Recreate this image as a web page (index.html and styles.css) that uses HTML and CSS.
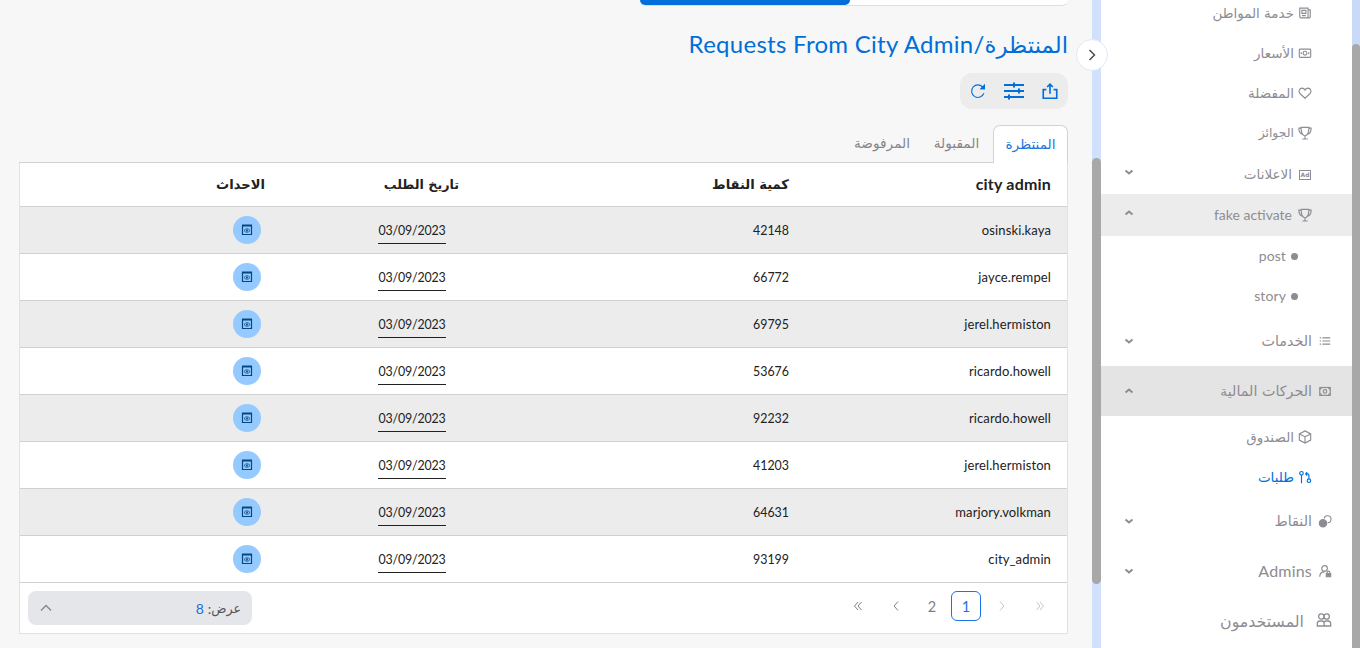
FILE: index.html
```html
<!DOCTYPE html>
<html lang="ar" dir="rtl">
<head>
<meta charset="utf-8">
<title>Requests From City Admin</title>
<link rel="stylesheet" href="styles.css">
</head>
<body>
<svg class="defs" aria-hidden="true">
  <symbol id="i-news" viewBox="0 0 16 16"><path d="M2 2.500h9.500v11H3.200L2 12.500zM11.500 4.500H14v8l-1 1h-1.500M4.500 5h4.500v3.500H4.500zM4.500 11H9"/></symbol>
  <symbol id="i-cash" viewBox="0 0 16 16"><rect x="1.500" y="3.500" width="13" height="9.500" rx="1"/><circle cx="8" cy="8.200" r="2.200"/><path d="M3.700 7v2.500M12.300 7v2.500"/></symbol>
  <symbol id="i-heart" viewBox="0 0 16 16"><path d="M8 14 2.500 8.900C0 6.300 1.500 2.500 4.600 2.500 6.500 2.500 7.500 3.700 8 4.700c.5-1 1.500-2.200 3.400-2.200 3.100 0 4.600 3.800 2.100 6.400z"/></symbol>
  <symbol id="i-cup" viewBox="0 0 16 16"><path d="M3.500 1.500h9c0 5-1 9-4.500 10-3.500-1-4.500-5-4.500-10zM3.500 2.500H1c0 4 1.500 6 4 7M12.500 2.500H15c0 4-1.500 6-4 7M8 11.500v3M5 14.800h6"/></symbol>
  <symbol id="i-cube" viewBox="0 0 16 16"><path d="M8 1 14.500 4.500v7L8 15l-6.500-3.500v-7zM1.500 4.500 8 7.700l6.500-3.200M8 7.700V15"/></symbol>
  <symbol id="i-pull" viewBox="0 0 16 16"><circle cx="4" cy="3.700" r="2"/><path d="M4 5.600V15M8.500 4.500h3L12.500 6v4M8.500 4.500l2-2M8.500 4.500l2 2"/><circle cx="12.500" cy="12.200" r="2"/></symbol>
  <symbol id="i-list" viewBox="0 0 16 16"><path d="M5 4.500h9M5 8h9M5 11.500h9M2 4.500h1.500M2 8h1.500M2 11.500h1.500"/></symbol>
  <symbol id="i-down" viewBox="0 0 10 10"><path d="m1.500 3.500 3.500 3 3.500-3"/></symbol>
  <symbol id="i-up" viewBox="0 0 10 10"><path d="m1.500 6.500 3.500-3 3.500 3"/></symbol>
  <symbol id="i-view" viewBox="0 0 14 14"><path d="M2.500 2.500h9v9h-9z" stroke-width="1.200"/><path d="M2 2.500h10" stroke-width="2"/><path d="M4 7.500Q7 4 10 7.500 7 11 4 7.500z" stroke-width=".8"/><circle cx="7" cy="7.500" r=".9" fill="currentColor" stroke="none"/></symbol>
</svg>

<div class="scroll scroll-page"><div class="thumb"></div></div>

<nav class="side">
  <a class="item sub first"><svg class="ic"><use href="#i-news"/></svg><span class="ar">خدمة المواطن</span></a>
  <a class="item sub"><svg class="ic"><use href="#i-cash"/></svg><span class="ar">الأسعار</span></a>
  <a class="item sub"><svg class="ic"><use href="#i-heart"/></svg><span class="ar">المفضلة</span></a>
  <a class="item sub prizes"><svg class="ic"><use href="#i-cup"/></svg><span class="ar">الجوائز</span></a>
  <a class="item group ads"><span class="ad"><b>Ad</b></span><span class="ar">الاعلانات</span><svg class="arrow"><use href="#i-down"/></svg></a>
  <a class="item group open"><svg class="ic"><use href="#i-cup"/></svg><span class="latin">fake activate</span><svg class="arrow"><use href="#i-up"/></svg></a>
  <a class="item leaf"><i class="dot"></i><span class="latin">post</span></a>
  <a class="item leaf"><i class="dot"></i><span class="latin">story</span></a>
  <a class="item main-item"><svg class="ic"><use href="#i-list"/></svg><span class="ar">الخدمات</span><svg class="arrow"><use href="#i-down"/></svg></a>
  <a class="item main-item selected"><svg class="ic bold" viewBox="0 0 16 16"><rect x="2" y="4" width="12" height="9"/><circle cx="8" cy="8.500" r="2"/><path d="M2 6.500 4.500 4M14 6.500 11.500 4M2 10.500l2.500 2.500M14 10.500l-2.500 2.500"/></svg><span class="ar">الحركات المالية</span><svg class="arrow"><use href="#i-up"/></svg></a>
  <a class="item sub"><svg class="ic"><use href="#i-cube"/></svg><span class="ar">الصندوق</span></a>
  <a class="item sub current"><svg class="ic"><use href="#i-pull"/></svg><span class="ar">طلبات</span></a>
  <a class="item main-item"><svg class="ic" viewBox="0 0 16 16"><circle cx="5.700" cy="10.700" r="4.200" fill="currentColor"/><path d="M7 5a4 4 0 1 1 4 5"/></svg><span class="ar">النقاط</span><svg class="arrow"><use href="#i-down"/></svg></a>
  <a class="item main-item"><svg class="ic" viewBox="0 0 16 16"><circle cx="7.500" cy="5" r="3.200"/><path d="M2 14.500c0-3 2-5.500 5.500-5.500"/><path d="M10.500 11V9.700a1.500 1.500 0 0 1 3 0V11"/><rect x="9.500" y="11" width="5" height="3.500" fill="currentColor"/></svg><span class="latin">Admins</span><svg class="arrow"><use href="#i-down"/></svg></a>
  <a class="item main-item users"><svg class="ic" viewBox="0 0 16 16"><circle cx="5.300" cy="4.500" r="2.700"/><circle cx="10.700" cy="4.500" r="2.700"/><path d="M1.300 14v-2.500Q1.500 9 4 9h2q2 0 2.200 2.500V14zM8.200 14h6.500v-2.500Q14.500 9 12 9h-2q-1.500 0-2 1.500"/></svg><span class="ar">المستخدمون</span></a>
</nav>

<div class="scroll scroll-main"><div class="thumb"></div><button class="toggle"><svg viewBox="0 0 12 12"><path d="m3.500 1 5 5-5 5"/></svg></button></div>

<main>
  <div class="switch"><div class="switch-on"></div></div>
  <h1><span class="ar">المنتظرة</span><span class="latin">/Requests From City Admin</span></h1>
  <div class="tools">
    <svg viewBox="0 0 20 20"><path d="M6 8.500H2.500V18h15V8.500H14M10 13V3M6.800 5.500 10 2.300l3.200 3.200" stroke-width="1.800"/></svg>
    <svg class="filter" viewBox="0 0 20 20"><path d="M0 4h20M0 10h20M0 16h20M10 1.500v5M15 7.500v5M5 13.500v5" stroke-width="2"/></svg>
    <svg viewBox="0 0 20 20"><path d="M16.500 12.500A7 7 0 1 1 15.500 6M17.200 3.500v4h-4z" stroke-width="1.200"/><path d="M17.500 3v5h-5z" fill="currentColor" stroke="none"/></svg>
  </div>
  <div class="tabs"><span class="tab on ar">المنتظرة</span><span class="tab ar">المقبولة</span><span class="tab ar">المرفوضة</span></div>
  <section class="panel">
    <div class="row head"><span class="latin">city admin</span><span class="ar">كمية النقاط</span><span class="ar hd">تاريخ الطلب</span><span class="ar">الاحداث</span></div>
    <div class="row"><span class="name">osinski.kaya</span><span class="num">42148</span><span class="date"><u>03/09/2023</u></span><span><button class="view"><svg><use href="#i-view"/></svg></button></span></div>
    <div class="row"><span class="name">jayce.rempel</span><span class="num">66772</span><span class="date"><u>03/09/2023</u></span><span><button class="view"><svg><use href="#i-view"/></svg></button></span></div>
    <div class="row"><span class="name">jerel.hermiston</span><span class="num">69795</span><span class="date"><u>03/09/2023</u></span><span><button class="view"><svg><use href="#i-view"/></svg></button></span></div>
    <div class="row"><span class="name">ricardo.howell</span><span class="num">53676</span><span class="date"><u>03/09/2023</u></span><span><button class="view"><svg><use href="#i-view"/></svg></button></span></div>
    <div class="row"><span class="name">ricardo.howell</span><span class="num">92232</span><span class="date"><u>03/09/2023</u></span><span><button class="view"><svg><use href="#i-view"/></svg></button></span></div>
    <div class="row"><span class="name">jerel.hermiston</span><span class="num">41203</span><span class="date"><u>03/09/2023</u></span><span><button class="view"><svg><use href="#i-view"/></svg></button></span></div>
    <div class="row"><span class="name">marjory.volkman</span><span class="num">64631</span><span class="date"><u>03/09/2023</u></span><span><button class="view"><svg><use href="#i-view"/></svg></button></span></div>
    <div class="row"><span class="name">city_admin</span><span class="num">93199</span><span class="date"><u>03/09/2023</u></span><span><button class="view"><svg><use href="#i-view"/></svg></button></span></div>
    <footer>
      <div class="pages">
        <svg class="off" viewBox="0 0 12 12"><path d="m2.500 2 3.500 4-3.500 4M6 2l3.500 4L6 10"/></svg>
        <svg class="off" viewBox="0 0 12 12"><path d="m4 1.500 4 4.500-4 4.500"/></svg>
        <span class="page on">1</span>
        <span class="page">2</span>
        <svg viewBox="0 0 12 12"><path d="M8 1.500 4 6l4 4.500"/></svg>
        <svg viewBox="0 0 12 12"><path d="M6 2 2.500 6 6 10M9.500 2 6 6l3.500 4"/></svg>
      </div>
      <div class="size"><span class="ar">عرض</span><span class="colon">:</span><b>8</b><svg viewBox="0 0 12 12"><path d="M1 8.500 6 3.500l5 5"/></svg></div>
    </footer>
  </section>
</main>
</body>
</html>
```
FILE: styles.css
```css
* { box-sizing: border-box; }
body { margin: 0; width: 1360px; height: 648px; display: flex; overflow: hidden; background: #f7f7f7; color: #212121; font-family: Lato, "DejaVu Sans", sans-serif; font-size: 13px; }
.defs { position: absolute; width: 0; height: 0; }
svg { fill: none; stroke: currentColor; stroke-width: 1.2; flex: none; }
.ar { font-family: "DejaVu Sans", sans-serif; white-space: nowrap; }
button { border: 0; padding: 0; font: inherit; }

.scroll { flex: none; background: #d0e0fd; }
.scroll .thumb { background: #a8a8a8; border-radius: 5px; }
.scroll-page { width: 8px; padding-top: 44px; background: #c8daf8; }
.scroll-page .thumb { height: 620px; }
.scroll-main { width: 9px; padding-top: 158px; position: relative; }
.scroll-main .thumb { height: 426px; }
.toggle { position: absolute; top: 39px; left: -16px; width: 32px; height: 32px; border: 1px solid #e2e8f4; border-radius: 50%; background: #fff; color: #444; display: grid; place-items: center; }
.toggle svg { width: 12px; height: 12px; stroke-width: 1.4; }

.side { width: 251px; flex: none; background: #fff; color: #8e8c92; font-size: 14px; }
.item { display: flex; align-items: center; height: 40px; padding: 0 40px 0 23px; gap: 4px; }
.item.first { margin-top: -8px; }
.item.sub, .item.ads { padding-top: 1px; }
.item .ar { font-size: 13.5px; line-height: 18px; }
.item.prizes .ar { font-size: 12.4px; }
.item .latin { padding-bottom: 2px; }
.ic { width: 14px; height: 14px; stroke-width: 1.3; }
.arrow { width: 10px; height: 10px; margin-right: auto; stroke-width: 2; }
.group { height: 42px; gap: 6px; }
.group .arrow { margin-bottom: 4px; }
.item.group.open { background: #ececec; }
.ad { width: 12px; height: 10px; margin: 3px 1px 0; border: 1px solid; font: 6px/8px "DejaVu Sans", sans-serif; text-align: center; }
.leaf { padding-right: 54px; gap: 5px; letter-spacing: .1px; }
.dot { width: 7px; height: 7px; border-radius: 50%; background: currentColor; }
.main-item { height: 50px; padding-right: 20px; gap: 6px; font-size: 16px; letter-spacing: .2px; }
.item.main-item .ar { font-size: 14.3px; letter-spacing: 0; }
.item.selected { background: #e4e4e4; }
.item.current { color: #006fd9; }
.item.users { gap: 12px; }
.item.users .ar { font-size: 15.8px; padding-top: 2px; }
.users .ic { width: 16px; height: 16px; margin-bottom: 2px; }

main { width: 1092px; padding: 0 24px 0 19px; }
.switch { width: 428px; height: 6px; background: #fff; border-radius: 0 0 9px 9px; border-bottom: 1px solid #cbe4fc; display: flex; justify-content: flex-end; }
.switch-on { width: 210px; height: 5px; background: #006fd9; border-radius: 0 0 8px 8px; }
h1 { margin: 19px 0 0; height: 40px; display: flex; align-items: center; font-weight: 400; font-size: 24px; color: #006fd9; white-space: nowrap; }
h1 .ar { font-size: 22.8px; }
h1 .latin { letter-spacing: .28px; padding-bottom: 3px; }
.tools { margin-top: 8px; width: 108px; height: 36px; border-radius: 12px; background: #ececec; color: #006fd9; display: flex; align-items: center; justify-content: space-between; padding: 0 9px; }
.tools svg { width: 18px; height: 18px; }
.tools .filter { width: 20px; height: 20px; }
.tabs { margin-top: 16px; height: 38px; display: flex; border-bottom: 1px solid #d2d2d2; color: #87858b; }
.tab { display: flex; align-items: center; justify-content: center; width: 71px; font-size: 13.7px; padding-bottom: 2px; }
.tab.on { width: 75px; margin-bottom: -1px; border: 1px solid #d2d2d2; border-bottom: 0; border-radius: 7px 7px 0 0; background: #fff; color: #1a73e0; }
.tab:nth-child(2) { margin-right: 1px; }
.tab:nth-child(3) { width: 78px; }
.panel { background: #fff; border: 1px solid #e2e2e4; border-top: 0; }
.row { display: grid; grid-template-columns: 262px 262px 262px 260px; height: 47px; align-items: center; border-bottom: 1px solid #d0d0d2; }
.row:nth-child(even) { background: #ececec; }
.row > span { padding: 0 16px; }
.row .name { letter-spacing: .12px; }
.row .num, .date { font-size: 12.4px; }
.row.head { height: 44px; font-size: 16px; font-weight: 700; }
.head .latin { letter-spacing: .2px; padding-bottom: 2px; }
.head .ar { font-size: 13.1px; }
.row > .hd { padding-right: 84px; }
.head .hd { font-size: 12.7px; }
.row > .date { text-align: center; padding-top: 2px; letter-spacing: -.15px; }
.date u { display: inline-block; text-decoration: none; border-bottom: 1px solid #212121; height: 26px; line-height: 26px; vertical-align: middle; }
.view { display: grid; place-items: center; margin-right: 4px; width: 28px; height: 28px; border-radius: 50%; background: #94caff; color: #06477d; }
.view svg { width: 14px; height: 14px; }
footer { height: 50px; display: flex; justify-content: space-between; align-items: center; padding: 0 16px 0 8px; }
.pages { display: flex; align-items: center; color: #7f7f84; gap: 6px; font-size: 14.5px; padding-bottom: 4px; margin-right: -5px; }
.pages svg { width: 12px; height: 12px; margin: 0 10px; stroke-width: 1; }
.pages .off { color: #c4c4c8; }
.page { width: 30px; height: 30px; display: grid; place-items: center; margin-left: -1px; }
.page.on { border: 1px solid #1a73e8; border-radius: 6px; color: #1a73e8; margin: 0 -1px 0 -2px; }
.size { width: 224px; height: 34px; border-radius: 8px; background: #e5e6ea; display: flex; align-items: center; padding: 0 11px 0 12px; font-size: 14px; color: #55555a; }
.size .ar { font-size: 12.6px; }
.size b { color: #1a6fdc; font-weight: 400; margin-right: 4px; }
.size svg { width: 12px; height: 12px; margin-right: auto; color: #88888c; stroke-width: 1.4; }
```
